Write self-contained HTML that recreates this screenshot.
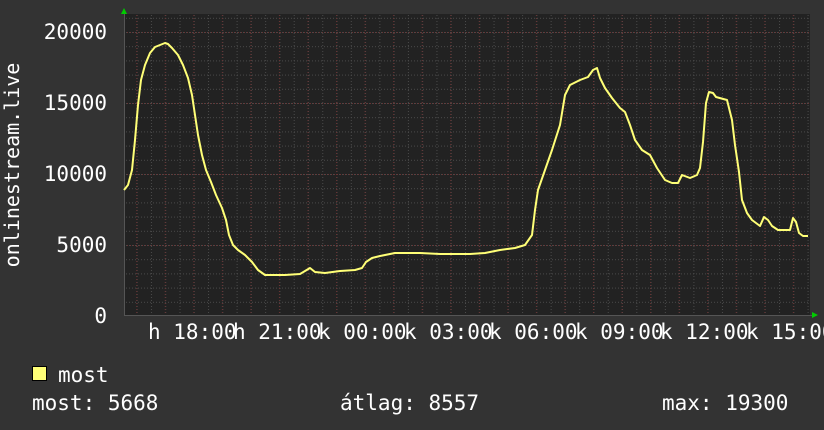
<!DOCTYPE html>
<html><head><meta charset="utf-8"><style>
html,body{margin:0;padding:0;background:#333;width:824px;height:430px;overflow:hidden}
svg{display:block}
text{font-family:"DejaVu Sans Mono","Liberation Mono",monospace;fill:#fff;font-size:21px}
</style></head><body>
<svg width="824" height="430" viewBox="0 0 824 430">
<defs>
<pattern id="vmin" x="122.4" y="0" width="14.275" height="430" patternUnits="userSpaceOnUse">
<line x1="0.5" y1="0" x2="0.5" y2="430" stroke="#4a4a4a" stroke-dasharray="1,2"/></pattern>
<pattern id="hmin" x="0" y="17.8" width="824" height="14.2" patternUnits="userSpaceOnUse">
<line x1="0" y1="0.5" x2="824" y2="0.5" stroke="#4a4a4a" stroke-dasharray="1,2"/></pattern>
<pattern id="vmaj" x="136.2" y="0" width="28.55" height="430" patternUnits="userSpaceOnUse">
<line x1="0.5" y1="0" x2="0.5" y2="430" stroke="#6a3333" stroke-dasharray="1,2"/></pattern>
</defs>
<rect x="124" y="14" width="686" height="302" fill="#222"/>
<rect x="124" y="14" width="686" height="302" fill="url(#hmin)"/>
<rect x="124" y="14" width="686" height="302" fill="url(#vmin)"/>
<rect x="124" y="14" width="686" height="302" fill="url(#vmaj)"/>
<g stroke="#6a3333" stroke-dasharray="1,2">
<line x1="124" y1="32.5" x2="810" y2="32.5"/><line x1="124" y1="103.5" x2="810" y2="103.5"/>
<line x1="124" y1="174.5" x2="810" y2="174.5"/><line x1="124" y1="245.5" x2="810" y2="245.5"/>
</g>
<line x1="124" y1="315.5" x2="812" y2="315.5" stroke="#555"/>
<line x1="124.5" y1="12" x2="124.5" y2="316" stroke="#555"/>
<polygon points="121,14 127,14 124,8" fill="#0c0"/>
<polygon points="812,312 812,318 818,315" fill="#0c0"/>
<polyline fill="none" stroke="#ffff77" stroke-width="2" stroke-linejoin="round" points="124,190 128,185 132,170 135,140 138,105 141,80 145,65 150,53 155,47 160,45 165,43 168,44 172,48 178,55 183,65 188,78 192,95 195,115 198,135 202,155 206,170 211,182 216,195 222,208 226,220 229,235 233,245 238,250 245,255 252,262 258,270 265,275 275,275 285,275 300,274 305,271 310,268 315,272 325,273 340,271 355,270 362,268 366,262 372,258 380,256 395,253 420,253 440,254 470,254 485,253 500,250 515,248 525,245 532,235 535,210 538,190 545,170 552,150 560,125 565,95 570,85 580,80 588,77 593,70 597,68 600,78 605,88 612,98 620,108 625,112 630,125 635,140 642,150 650,155 657,168 665,180 672,183 678,183 682,175 690,178 697,175 700,168 703,142 706,103 709,92 713,93 716,97 727,100 732,120 735,145 739,172 742,200 747,213 752,220 760,226 764,217 768,220 772,226 778,230 790,230 793,218 796,222 799,233 803,236 808,236"/>
<g text-anchor="end" style="font-size:20px">
<text x="107" y="39">20000</text><text x="107" y="110">15000</text>
<text x="107" y="181">10000</text><text x="107" y="252">5000</text><text x="107" y="323">0</text>
</g>
<text transform="translate(19,165) rotate(-90)" text-anchor="middle" style="font-size:20px">onlinestream.live</text>
<text x="148" y="339">h 18:00</text><text x="233" y="339">h 21:00</text>
<text x="318" y="339">k 00:00</text><text x="404" y="339">k 03:00</text>
<text x="489" y="339">k 06:00</text><text x="575" y="339">k 09:00</text>
<text x="660" y="339">k 12:00</text><text x="746" y="339">k 15:00</text>
<rect x="32.5" y="366.5" width="14" height="14" fill="#ffff77" stroke="#000"/>
<text x="58" y="382">most</text>
<text x="32" y="410">most: 5668</text>
<text x="340" y="410">átlag: 8557</text>
<text x="662" y="410">max: 19300</text>
</svg>
</body></html>
